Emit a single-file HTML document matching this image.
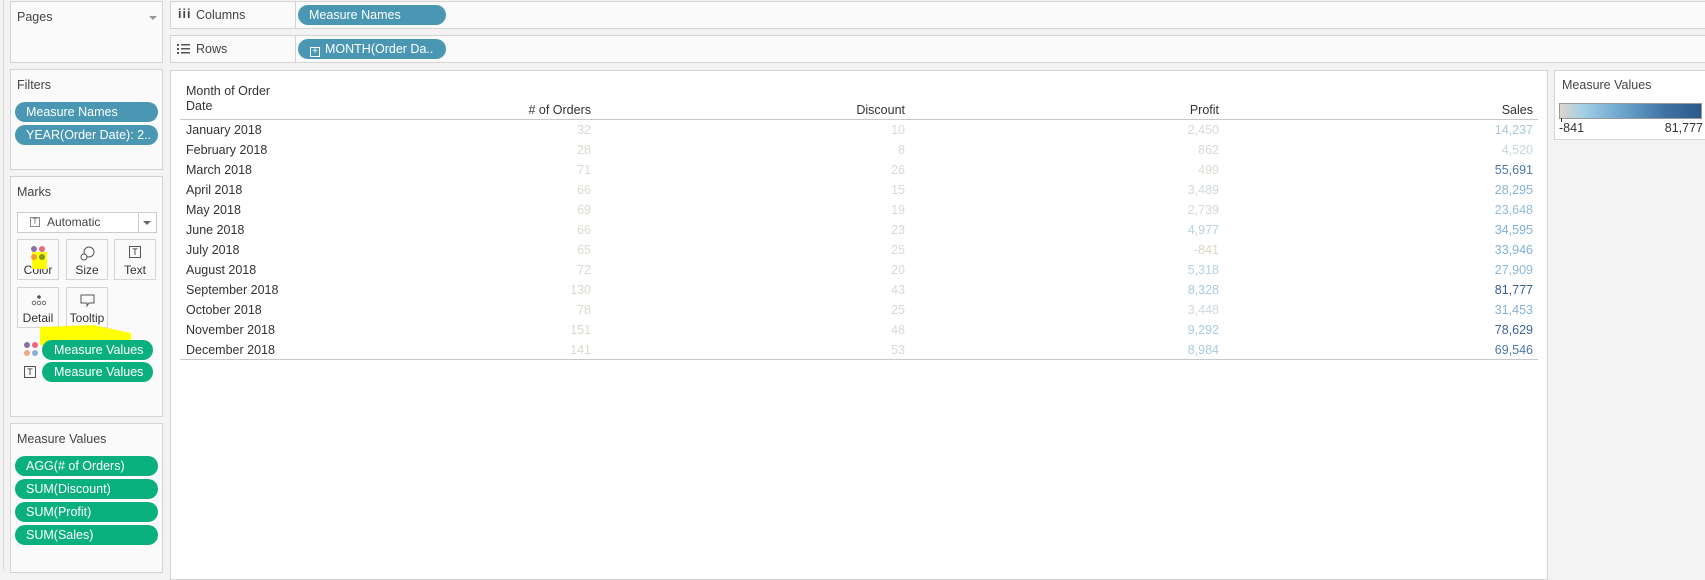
<!DOCTYPE html>
<html><head><style>
*{margin:0;padding:0;box-sizing:border-box}
body{width:1705px;height:569px;background:#f3f3f3;font-family:"Liberation Sans",sans-serif;font-size:12px;color:#333;position:relative;overflow:hidden}
.a{position:absolute}
.box{position:absolute;background:#fafafa;border:1px solid #d4d4d4}
.t{position:absolute;font-size:12.5px;color:#444}
.pill{position:absolute;height:20px;border-radius:10px;color:#fff;font-size:12.5px;line-height:20px;padding-left:11px;white-space:nowrap}
.bl{background:#4a97b3}
.gr{background:#0bb07f}
.btn{position:absolute;width:42px;height:41px;border:1px solid #d4d4d4;background:#fafafa;font-size:12px;text-align:center;color:#333}
.btn span{position:absolute;left:0;right:0;top:23px}
.row{position:absolute;left:186px;font-size:12.5px;color:#333;height:20px;line-height:20px}
.n{position:absolute;text-align:right;font-size:12.5px;height:20px;line-height:20px}
</style></head><body>
<div class="a" style="left:3px;top:0;width:1px;height:569px;background:#d8d8d8"></div>
<div class="box" style="left:10px;top:1px;width:153px;height:62px"></div>
<div class="t" style="left:17px;top:10px">Pages</div>
<div class="a" style="left:149px;top:16px;border-left:4px solid transparent;border-right:4px solid transparent;border-top:4px solid #999"></div>
<div class="box" style="left:10px;top:69px;width:153px;height:101px"></div>
<div class="t" style="left:17px;top:78px">Filters</div>
<div class="pill bl" style="left:15px;top:102px;width:143px">Measure Names</div>
<div class="pill bl" style="left:15px;top:125px;width:143px">YEAR(Order Date): 2..</div>
<div class="box" style="left:10px;top:176px;width:153px;height:241px"></div>
<div class="t" style="left:17px;top:185px">Marks</div>
<div class="a" style="left:17px;top:212px;width:140px;height:21px;border:1px solid #ccc;background:#fff"></div>
<div class="a" style="left:30px;top:217px;width:10px;height:10px;border:1px solid #888;font-size:8px;line-height:8px;text-align:center;color:#666">T</div>
<div class="t" style="left:47px;top:215px;font-size:12px">Automatic</div>
<div class="a" style="left:138px;top:212px;width:1px;height:21px;background:#ccc"></div>
<div class="a" style="left:143px;top:221px;border-left:4px solid transparent;border-right:4px solid transparent;border-top:4px solid #666"></div>
<div class="btn" style="left:17px;top:239px"><span>Color</span></div>
<div class="a" style="left:32px;top:252px;width:15px;height:17px;background:#ffff00"></div>
<div class="a" style="left:31px;top:246px;width:6px;height:6px;border-radius:3px;background:#8a6fa8"></div>
<div class="a" style="left:39px;top:246px;width:6px;height:6px;border-radius:3px;background:#e86a7a"></div>
<div class="a" style="left:31px;top:254px;width:6px;height:6px;border-radius:3px;background:#f0a030"></div>
<div class="a" style="left:39px;top:254px;width:6px;height:6px;border-radius:3px;background:#7a9a20"></div>
<div class="btn" style="left:66px;top:239px"><span>Size</span>
<svg class="a" style="left:12px;top:5px" width="16" height="16"><circle cx="10" cy="7" r="5" fill="none" stroke="#555"/><circle cx="5" cy="12" r="3" fill="#fff" stroke="#555"/></svg></div>
<div class="btn" style="left:114px;top:239px"><span>Text</span>
<div class="a" style="left:14px;top:6px;width:12px;height:12px;border:1px solid #555;font-size:9px;line-height:10px">T</div></div>
<div class="btn" style="left:17px;top:287px"><span>Detail</span>
<svg class="a" style="left:12px;top:6px" width="18" height="12"><circle cx="9" cy="3" r="1.8" fill="#555"/><circle cx="4" cy="9" r="1.8" fill="none" stroke="#555" stroke-width=".8"/><circle cx="9" cy="9" r="1.8" fill="none" stroke="#555" stroke-width=".8"/><circle cx="14" cy="9" r="1.8" fill="none" stroke="#555" stroke-width=".8"/></svg></div>
<div class="btn" style="left:66px;top:287px"><span>Tooltip</span>
<svg class="a" style="left:13px;top:6px" width="16" height="14"><path d="M1 1H14V9H9L7 12V9H1Z" fill="none" stroke="#555"/></svg></div>
<svg class="a" style="left:38px;top:322px" width="100" height="25"><path d="M2 5L55 3L93 11L93 21L2 23Z" fill="#ffff00"/></svg>
<div class="pill gr" style="left:42px;top:340px;width:111px;padding-left:12px">Measure Values</div>
<div class="pill gr" style="left:42px;top:362px;width:111px;padding-left:12px">Measure Values</div>
<div class="a" style="left:24px;top:342px;width:6px;height:6px;border-radius:3px;background:#8a6fa8"></div>
<div class="a" style="left:32px;top:342px;width:6px;height:6px;border-radius:3px;background:#e86a7a"></div>
<div class="a" style="left:24px;top:350px;width:6px;height:6px;border-radius:3px;background:#f0a88a"></div>
<div class="a" style="left:32px;top:350px;width:6px;height:6px;border-radius:3px;background:#8ab0d8"></div>
<div class="a" style="left:24px;top:366px;width:12px;height:12px;border:1px solid #555;font-size:9px;line-height:10px;text-align:center">T</div>
<div class="box" style="left:10px;top:423px;width:153px;height:150px"></div>
<div class="t" style="left:17px;top:432px">Measure Values</div>
<div class="pill gr" style="left:15px;top:456px;width:143px">AGG(# of Orders)</div>
<div class="pill gr" style="left:15px;top:479px;width:143px">SUM(Discount)</div>
<div class="pill gr" style="left:15px;top:502px;width:143px">SUM(Profit)</div>
<div class="pill gr" style="left:15px;top:525px;width:143px">SUM(Sales)</div>

<div class="box" style="left:170px;top:1px;width:1540px;height:28px"></div>
<div class="a" style="left:295px;top:1px;width:1px;height:28px;background:#d4d4d4"></div>
<div class="t" style="left:178px;top:7px;font-weight:bold;letter-spacing:1px">iii</div>
<div class="t" style="left:196px;top:8px">Columns</div>
<div class="pill bl" style="left:298px;top:5px;width:148px">Measure Names</div>
<div class="box" style="left:170px;top:35px;width:1540px;height:28px"></div>
<div class="a" style="left:295px;top:35px;width:1px;height:28px;background:#d4d4d4"></div>
<svg class="a" style="left:177px;top:43px" width="14" height="12"><g fill="#555"><rect x="0" y="1" width="2" height="2"/><rect x="0" y="5" width="2" height="2"/><rect x="0" y="9" width="2" height="2"/><rect x="4" y="1" width="9" height="1.5"/><rect x="4" y="5" width="9" height="1.5"/><rect x="4" y="9" width="9" height="1.5"/></g></svg>
<div class="t" style="left:196px;top:42px">Rows</div>
<div class="pill bl" style="left:298px;top:39px;width:148px;padding-left:12px"><span style="display:inline-block;width:10px;height:10px;border:1px solid #fff;font-size:10px;line-height:7px;text-align:center;vertical-align:-1px;margin-right:5px">+</span>MONTH(Order Da..</div>

<div class="a" style="left:170px;top:70px;width:1378px;height:510px;background:#fff;border:1px solid #d4d4d4"></div>
<div class="row" style="top:84px;line-height:15px">Month of Order<br>Date</div>
<div class="n" style="left:391px;width:200px;top:100px;color:#333">#&nbsp;of Orders</div>
<div class="n" style="left:705px;width:200px;top:100px;color:#333">Discount</div>
<div class="n" style="left:1019px;width:200px;top:100px;color:#333">Profit</div>
<div class="n" style="left:1333px;width:200px;top:100px;color:#333">Sales</div>
<div class="a" style="left:180px;top:119px;width:1358px;height:1px;background:#c8c8c8"></div>
<div class="a" style="left:180px;top:359px;width:1358px;height:1px;background:#c8c8c8"></div>
<div id="rows"></div>

<div class="a" style="left:1554px;top:70px;width:160px;height:70px;background:#fff;border:1px solid #d4d4d4"></div>
<div class="t" style="left:1562px;top:78px">Measure Values</div>
<div class="a" style="left:1559px;top:103px;width:143px;height:16px;border:1px solid #999;background:linear-gradient(to right,#ddd6c8,#a6d0e6 15%,#6aa3cc 45%,#3f72a3 75%,#2a5a8a)"></div>
<div class="a" style="left:1561px;top:118px;width:1px;height:4px;background:#333"></div>
<div class="t" style="left:1559px;top:121px;color:#333">-841</div>
<div class="t" style="left:1643px;top:121px;width:60px;text-align:right;color:#333">81,777</div>
<script>
var m=["January","February","March","April","May","June","July","August","September","October","November","December"];
var o=[32,28,71,66,69,66,65,72,130,78,151,141],d=[10,8,26,15,19,23,25,20,43,25,48,53];
var p=["2,450","862","499","3,489","2,739","4,977","-841","5,318","8,328","3,448","9,292","8,984"];
var pc=["#d6d8d8","#dcdad6","#dcdad4","#d0d8dc","#d4d8da","#b9d3e2","#e0d4c4","#b5d2e3","#a9cbe2","#cfd8dc","#a5cae3","#a9cbe2"];
var s=["14,237","4,520","55,691","28,295","23,648","34,595","33,946","27,909","81,777","31,453","78,629","69,546"];
var sc=["#a5c9e0","#c4d6e0","#4e78a4","#86b3d6","#93bddd","#7fb0d6","#82b2d6","#8cb8da","#355f8e","#84b3d6","#3a6492","#4d79a6"];
var h="";
for(var i=0;i<12;i++){var y=120+i*20;
h+='<div class="row" style="top:'+y+'px">'+m[i]+' 2018</div>';
h+='<div class="n" style="left:491px;width:100px;top:'+y+'px;color:#dcd8d2">'+o[i]+'</div>';
h+='<div class="n" style="left:805px;width:100px;top:'+y+'px;color:#dcd8d2">'+d[i]+'</div>';
h+='<div class="n" style="left:1119px;width:100px;top:'+y+'px;color:'+pc[i]+'">'+p[i]+'</div>';
h+='<div class="n" style="left:1433px;width:100px;top:'+y+'px;color:'+sc[i]+'">'+s[i]+'</div>';}
document.getElementById("rows").innerHTML=h;
</script>
</body></html>
